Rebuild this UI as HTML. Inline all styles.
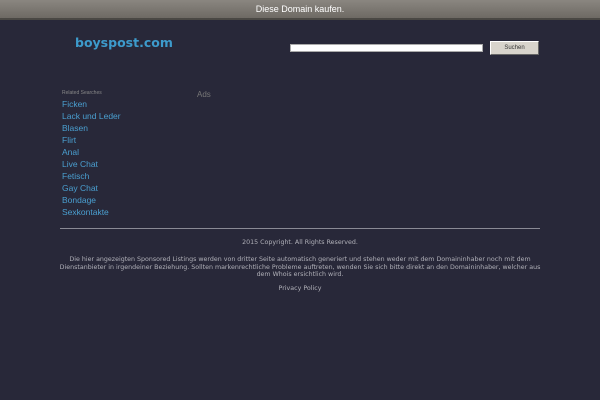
<!DOCTYPE html>
<html><head><meta charset="utf-8"><style>
*{margin:0;padding:0}
body{width:600px;height:400px;background:#282839;position:relative;overflow:hidden;font-family:"Liberation Sans",sans-serif}
#top{position:absolute;left:0;top:0;width:600px;height:18px;background:linear-gradient(#8a8680,#6e6a64);border-bottom:2px solid #4a4844;color:#fff;font-size:9px;text-align:center;line-height:18px}
#logo{position:absolute;left:75px;top:35px;font-family:"DejaVu Sans",sans-serif;font-weight:bold;font-size:12.5px;color:#3d9bcc}
#inp{position:absolute;left:290px;top:44px;width:193px;height:8px;background:#fff;border:1px solid #aaa;box-sizing:border-box}
#btn{position:absolute;left:490px;top:41px;width:49px;height:14px;background:#d8d4cc;border:1px solid #fff;border-right-color:#666;border-bottom-color:#666;box-sizing:border-box;font-size:6px;text-align:center;line-height:12px;color:#333}
#rs{position:absolute;left:62px;top:90px;font-size:5px;color:#888}
#links{position:absolute;left:62px;top:98px}
#links div{font-size:8.5px;line-height:12px;color:#4a9fd0}
#ads{position:absolute;left:197px;top:90px;font-size:8px;color:#777}
#hr{position:absolute;left:60px;top:228px;width:480px;height:1px;background:#8a8a95}
.f{position:absolute;left:60px;width:480px;text-align:center;font-family:"DejaVu Sans",sans-serif;font-size:6.3px;color:#b0b0b8;line-height:7.5px}
</style></head><body>
<div id="top">Diese Domain kaufen.</div>
<div id="logo">boyspost.com</div>
<div id="inp"></div>
<div id="btn">Suchen</div>
<div id="rs">Related Searches</div>
<div id="links"><div>Ficken</div><div>Lack und Leder</div><div>Blasen</div><div>Flirt</div><div>Anal</div><div>Live Chat</div><div>Fetisch</div><div>Gay Chat</div><div>Bondage</div><div>Sexkontakte</div></div>
<div id="ads">Ads</div>
<div id="hr"></div>
<div class="f" style="top:239px">2015 Copyright. All Rights Reserved.</div>
<div class="f" style="top:256px;left:58px;width:484px">Die hier angezeigten Sponsored Listings werden von dritter Seite automatisch generiert und stehen weder mit dem Domaininhaber noch mit dem Dienstanbieter in irgendeiner Beziehung. Sollten markenrechtliche Probleme auftreten, wenden Sie sich bitte direkt an den Domaininhaber, welcher aus dem Whois ersichtlich wird.</div>
<div class="f" style="top:285px">Privacy Policy</div>
</body></html>
